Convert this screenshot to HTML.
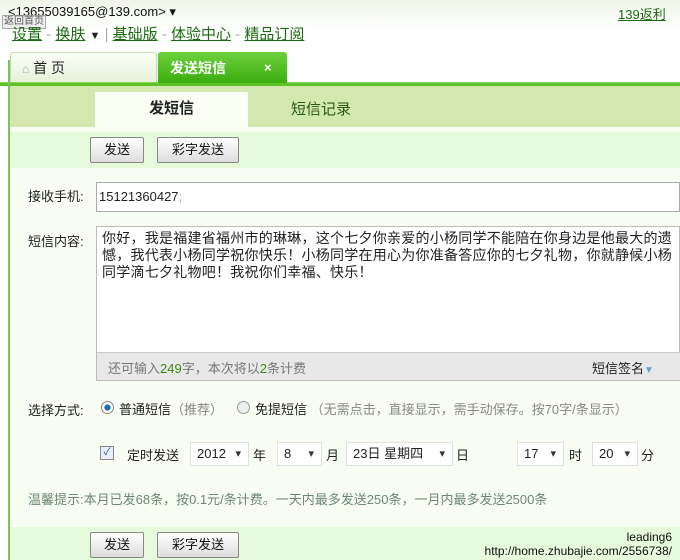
<!DOCTYPE html>
<html><head><meta charset="utf-8"><style>
*{margin:0;padding:0;box-sizing:border-box}
body{width:680px;height:560px;overflow:hidden;background:#fff;font-family:"Liberation Sans","Noto Sans CJK SC",sans-serif;font-size:13px;color:#222;position:relative}
.a{position:absolute}
a{color:#1a6b10;text-decoration:underline}
.btn{position:absolute;height:26px;border:1px solid #888;border-radius:2px;background:linear-gradient(#fff,#ddd);font-size:13px;text-align:center;line-height:24px;color:#111}
.sel{position:absolute;height:24px;background:#fff;border:1px solid #e0e0e0;font-size:13px;line-height:22px;padding-left:6px}
.sel:after{content:"▾";position:absolute;right:7px;top:0;font-size:11px;color:#333}
</style></head><body>
<div class="a" style="left:0;top:0;width:680px;height:30px;background:linear-gradient(#eef5e8,#fff)"></div>
<div class="a" style="left:8px;top:4px;font-size:13px;color:#111">&lt;13655039165@139.com&gt; ▾</div>
<div class="a" style="left:2px;top:15px;font-size:10px;color:#555;background:#eee;border:1px solid #aaa;padding:0 1px;line-height:12px">返回首页</div>
<div class="a" style="left:12px;top:23px;font-size:15px;color:#aaa"><a>设置</a> - <a>换肤</a> <span style="color:#222;font-size:11px">▼</span> | <a>基础版</a> - <a>体验中心</a> - <a>精品订阅</a></div>
<div class="a" style="left:618px;top:4px;font-size:13px"><a>139返利</a></div>
<div class="a" style="left:0;top:82px;width:680px;height:4px;background:#5cc228;border-top:1px solid #8ad55a"></div>
<div class="a" style="left:8px;top:60px;width:2px;height:500px;background:#7cc35a"></div>
<div class="a" style="left:10px;top:52px;width:147px;height:30px;background:linear-gradient(#fafff5,#e6f2da);border:1px solid #c6dcb4;border-bottom:none;border-radius:3px 3px 0 0"></div>
<div class="a" style="left:22px;top:58px;font-size:14px;color:#222"><span style="color:#aaa;font-size:12px">⌂</span> 首 页</div>
<div class="a" style="left:158px;top:52px;width:129px;height:31px;background:linear-gradient(#6ed13c,#3aad10);border-radius:3px 3px 0 0"></div>
<div class="a" style="left:170px;top:58px;font-size:14px;color:#fff;font-weight:bold">发送短信</div>
<div class="a" style="left:264px;top:60px;font-size:13px;color:#fff;font-weight:bold">×</div>
<div class="a" style="left:10px;top:86px;width:670px;height:41px;background:#d3e8ae"></div>
<div class="a" style="left:95px;top:92px;width:153px;height:35px;background:#fafff4;text-align:center;line-height:33px;font-size:15px;font-weight:bold">发短信</div>
<div class="a" style="left:291px;top:98px;font-size:15px;color:#2a5a10">短信记录</div>
<div class="a" style="left:10px;top:127px;width:670px;height:433px;background:#f8fdf3"></div>
<div class="a" style="left:10px;top:132px;width:670px;height:36px;background:#e4fadb"></div>
<div class="btn" style="left:90px;top:137px;width:54px">发送</div>
<div class="btn" style="left:157px;top:137px;width:82px">彩字发送</div>
<div class="a" style="left:28px;top:186px">接收手机:</div>
<div class="a" style="left:96px;top:182px;width:584px;height:30px;background:#fff;border:1px solid #aaa;padding:6px 0 0 2px;font-size:13px">15121360427<span style="color:#aaa">;</span></div>
<div class="a" style="left:28px;top:231px">短信内容:</div>
<div class="a" style="left:96px;top:226px;width:584px;height:155px;background:#fff;border:1px solid #bbb"></div>
<div class="a" style="left:102px;top:230px;width:576px;font-size:14px;letter-spacing:0.25px;line-height:17px">你好，我是福建省福州市的琳琳，这个七夕你亲爱的小杨同学不能陪在你身边是他最大的遗憾，我代表小杨同学祝你快乐！小杨同学在用心为你准备答应你的七夕礼物，你就静候小杨同学滴七夕礼物吧！我祝你们幸福、快乐！</div>
<div class="a" style="left:97px;top:352px;width:583px;height:28px;background:#e8e8e8;border-top:1px solid #ccc"></div>
<div class="a" style="left:108px;top:358px;color:#777">还可输入<span style="color:#3b8a12">249</span>字，本次将以<span style="color:#3b8a12">2</span>条计费</div>
<div class="a" style="left:592px;top:358px;color:#222">短信签名<span style="color:#6aa0d0;font-size:10px">▼</span></div>
<div class="a" style="left:28px;top:400px">选择方式:</div>
<div class="a" style="left:101px;top:401px;width:13px;height:13px;border-radius:50%;border:1px solid #888;background:radial-gradient(#1d6fb5 35%,#fff 45%)"></div>
<div class="a" style="left:119px;top:399px">普通短信<span style="color:#888">（推荐）</span></div>
<div class="a" style="left:237px;top:401px;width:13px;height:13px;border-radius:50%;border:1px solid #999;background:#eee"></div>
<div class="a" style="left:255px;top:399px">免提短信 <span style="color:#888">（无需点击，直接显示，需手动保存。按70字/条显示）</span></div>
<div class="a" style="left:100px;top:446px;width:14px;height:14px;border:1px solid #888;background:#e8eef8;font-size:10px;color:#2a4fa0;text-align:center;line-height:12px">✓</div>
<div class="a" style="left:127px;top:445px">定时发送</div>
<div class="sel" style="left:190px;top:442px;width:59px">2012</div>
<div class="a" style="left:253px;top:445px">年</div>
<div class="sel" style="left:277px;top:442px;width:45px">8</div>
<div class="a" style="left:326px;top:445px">月</div>
<div class="sel" style="left:346px;top:442px;width:107px">23日 星期四</div>
<div class="a" style="left:456px;top:445px">日</div>
<div class="sel" style="left:517px;top:442px;width:47px">17</div>
<div class="a" style="left:569px;top:445px">时</div>
<div class="sel" style="left:592px;top:442px;width:46px">20</div>
<div class="a" style="left:641px;top:445px">分</div>
<div class="a" style="left:28px;top:489px;color:#6a8a70">温馨提示:本月已发68条，按0.1元/条计费。一天内最多发送250条，一月内最多发送2500条</div>
<div class="a" style="left:10px;top:527px;width:670px;height:33px;background:#e4fadb"></div>
<div class="btn" style="left:90px;top:532px;width:54px">发送</div>
<div class="btn" style="left:157px;top:532px;width:82px">彩字发送</div>
<div class="a" style="left:600px;top:530px;font-size:12px;color:#111;text-align:right;width:72px">leading6</div>
<div class="a" style="left:470px;top:544px;font-size:12px;color:#111;text-align:right;width:202px">http://home.zhubajie.com/2556738/</div>
</body></html>
